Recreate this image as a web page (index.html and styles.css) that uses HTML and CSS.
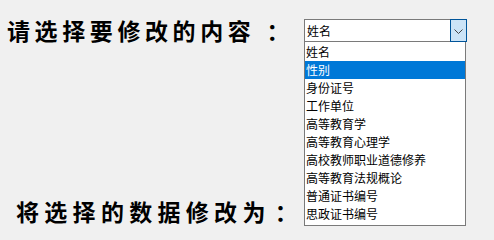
FILE: index.html
```html
<!DOCTYPE html>
<html lang="zh">
<head>
<meta charset="utf-8">
<title>修改内容</title>
<link rel="stylesheet" href="styles.css">
</head>
<body>
<div class="form">
  <div class="row row-top">
    <span class="label label-a">请选择要修改的内容<span class="colon">：</span></span>
    <div class="combo">
      <div class="combo-field"><span class="combo-value">姓名</span></div>
      <div class="combo-btn">
        <svg width="9" height="5" viewBox="0 0 9 5"><polyline points="0.5,0.5 4.5,4.5 8.5,0.5" fill="none" stroke="#444" stroke-width="1"/></svg>
      </div>
      <ul class="dropdown">
        <li class="item">姓名</li>
        <li class="item selected">性别</li>
        <li class="item">身份证号</li>
        <li class="item">工作单位</li>
        <li class="item">高等教育学</li>
        <li class="item">高等教育心理学</li>
        <li class="item">高校教师职业道德修养</li>
        <li class="item">高等教育法规概论</li>
        <li class="item">普通证书编号</li>
        <li class="item">思政证书编号</li>
      </ul>
    </div>
  </div>
  <div class="row row-bottom">
    <span class="label label-b">将选择的数据修改为<span class="colon">：</span></span>
  </div>
</div>
</body>
</html>
```

FILE: styles.css
```css
html, body {
  margin: 0;
  padding: 0;
}
body {
  width: 494px;
  height: 236px;
  overflow: hidden;
  background: #f0f0f0;
  color: #000;
  font-family: "Noto Sans CJK SC", "Noto Sans", sans-serif;
}
.form {
  padding-top: 19px;
}
.row-top {
  display: grid;
  grid-template-columns: 304px 163px;
  height: 23px;
  align-items: center;
}
.label {
  font-family: "Noto Sans CJK SC", sans-serif;
  font-weight: 700;
  font-size: 23px;
  line-height: 23px;
  white-space: nowrap;
}
.label-a {
  padding-left: 7px;
  letter-spacing: 4.6px;
}
.row-bottom {
  margin-top: 158px;
  height: 23px;
  padding-left: 16px;
}
.label-b {
  letter-spacing: 5.3px;
}
.label-a .colon {
  margin-left: 11px;
}
.label-b .colon {
  margin-left: 4px;
}
.combo {
  position: relative;
  display: flex;
  height: 23px;
}
.combo-field {
  flex: 1;
  box-sizing: border-box;
  height: 23px;
  border: 1px solid #7a7a7a;
  border-right: none;
  background: #fff;
  display: flex;
  align-items: center;
  padding-left: 2px;
}
.combo-value {
  font-size: 12px;
  line-height: 16px;
}
.combo-btn {
  width: 17px;
  height: 23px;
  box-sizing: border-box;
  border: 1px solid #005499;
  background: #cce4f7;
  display: flex;
  align-items: center;
  justify-content: center;
}
.combo-btn svg {
  display: block;
  margin-top: 1px;
}
.dropdown {
  position: absolute;
  top: 23px;
  left: 0;
  width: 162px;
  box-sizing: border-box;
  margin: 0;
  padding: 1px 0 2px;
  list-style: none;
  background: #fff;
  border: 1px solid #7a7a7a;
  border-top: none;
}
.item {
  height: 18px;
  line-height: 18px;
  font-size: 12px;
  padding-left: 1px;
  white-space: nowrap;
}
.item.selected {
  background: #0078d7;
  color: #fff;
}
```
